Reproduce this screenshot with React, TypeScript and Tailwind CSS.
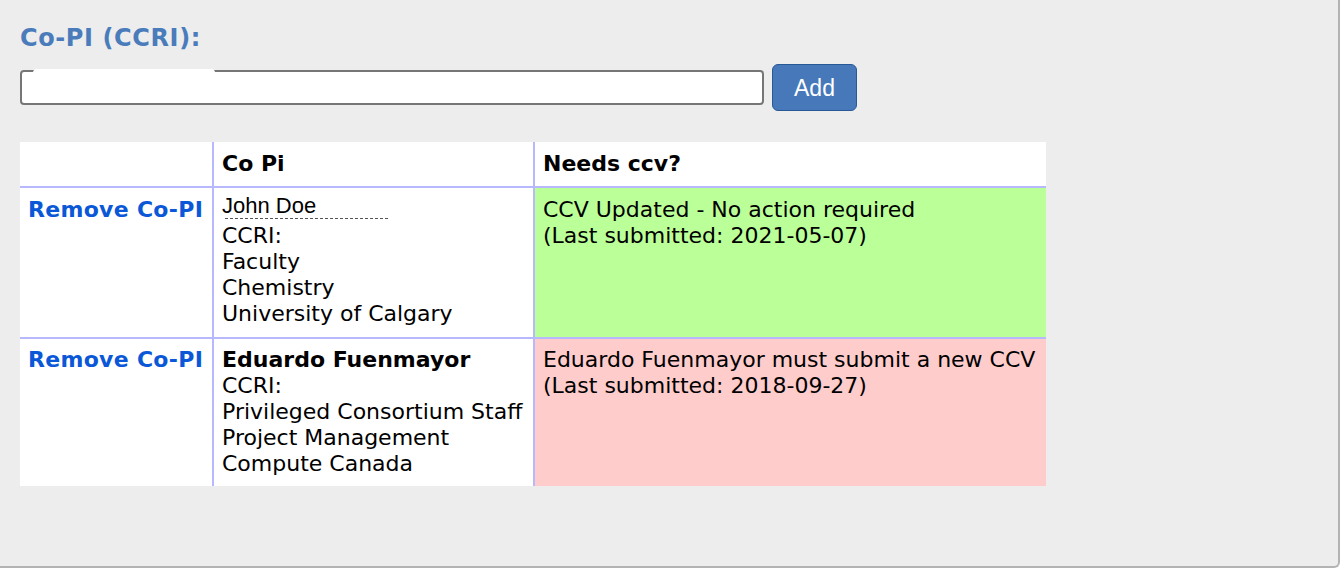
import React from "react";

export default function App() {
  return (
    <div className="w-[1344px] h-[584px] bg-white font-['DejaVu_Sans',Verdana,sans-serif] text-[22px] leading-[26px] text-black">
      <div className="w-[1340px] h-[568px] bg-[#ededed] border-r-2 border-b-2 border-[#b3b3b3] rounded-br-[6px] px-5 pt-[25px]">
        <h2 className="font-bold text-[#4a7cbb] text-[24px] leading-[26px] tracking-[0.6px]">Co-PI (CCRI):</h2>
        <div className="mt-[13px] flex items-center gap-[8px]">
          <div className="relative">
            <input
              type="text"
              className="block w-[744px] h-[35px] bg-white border-2 border-[#767676] rounded-[4px] outline-none"
            />
            <div className="absolute left-[13px] top-[-1px] w-[182px] h-[8px] bg-white rounded-t-[4px]" />
          </div>
          <button className="w-[85px] h-[47px] bg-[#4678ba] border-[1.5px] border-[#285994] rounded-[6px] text-white text-[23px] font-['Liberation_Sans',Arial,sans-serif]">
            Add
          </button>
        </div>

        <table className="mt-[31px] w-[1026px] border-collapse bg-white">
          <thead>
            <tr>
              <th className="w-[193px] p-0" />
              <th className="w-[321px] border-l-2 border-[#b8b8ff] text-left font-bold px-2 py-[9px]">Co Pi</th>
              <th className="border-l-2 border-[#b8b8ff] text-left font-bold px-2 py-[9px]">Needs ccv?</th>
            </tr>
          </thead>
          <tbody>
            <tr className="border-t-2 border-[#b8b8ff]">
              <td className="align-top pl-2 pr-1 pt-[9px] pb-[10px]">
                <a href="#" className="font-bold text-[#0a57d8] whitespace-nowrap tracking-[0.3px]">Remove Co-PI</a>
              </td>
              <td className="align-top border-l-2 border-[#b8b8ff] px-2 pt-[9px] pb-[10px]">
                <div className="relative">
                  <span className="relative -top-[4px] font-['Liberation_Sans',Arial,sans-serif]">John Doe</span>
                  <div className="absolute left-[3px] top-[21px] w-[163px] border-t-[1.5px] border-dashed border-[#555]" />
                </div>
                <div>CCRI:</div>
                <div>Faculty</div>
                <div>Chemistry</div>
                <div>University of Calgary</div>
              </td>
              <td className="align-top border-l-2 border-[#b8b8ff] bg-[#bbff99] px-2 pt-[9px] pb-[10px]">
                <div>CCV Updated - No action required</div>
                <div>(Last submitted: 2021-05-07)</div>
              </td>
            </tr>
            <tr className="border-t-2 border-[#b8b8ff]">
              <td className="align-top pl-2 pr-1 pt-[8px] pb-[9px]">
                <a href="#" className="font-bold text-[#0a57d8] whitespace-nowrap tracking-[0.3px]">Remove Co-PI</a>
              </td>
              <td className="align-top border-l-2 border-[#b8b8ff] px-2 pt-[8px] pb-[9px]">
                <div className="font-bold">Eduardo Fuenmayor</div>
                <div>CCRI:</div>
                <div className="whitespace-nowrap">Privileged Consortium Staff</div>
                <div>Project Management</div>
                <div>Compute Canada</div>
              </td>
              <td className="align-top border-l-2 border-[#b8b8ff] bg-[#ffcccc] px-2 pt-[8px] pb-[9px]">
                <div>Eduardo Fuenmayor must submit a new CCV</div>
                <div>(Last submitted: 2018-09-27)</div>
              </td>
            </tr>
          </tbody>
        </table>
      </div>
    </div>
  );
}
